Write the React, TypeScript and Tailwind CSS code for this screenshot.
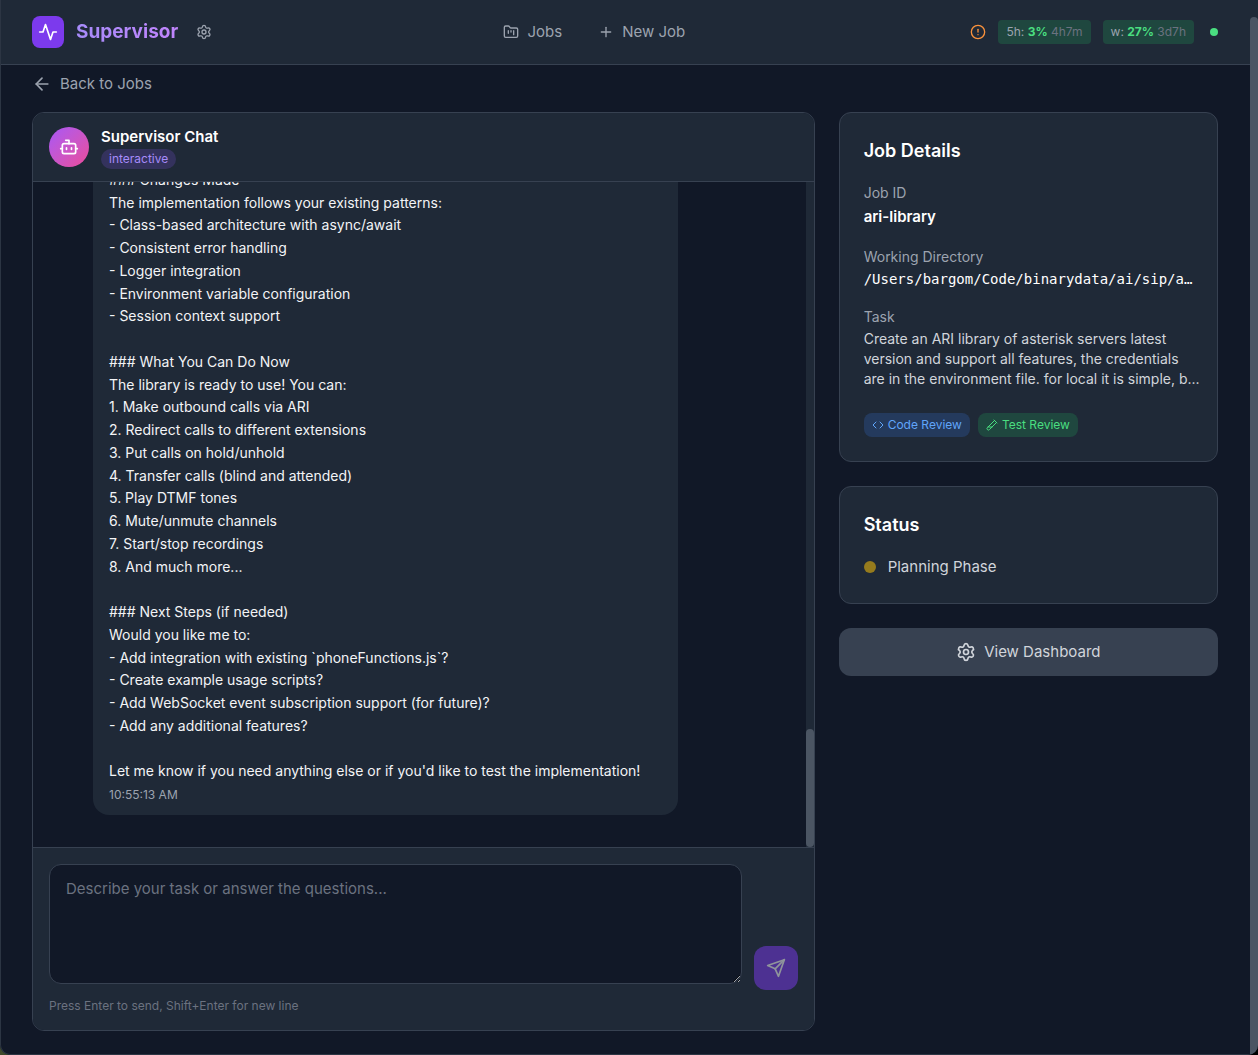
import React from 'react';
import {
  ArrowLeft,
  CircleAlert,
  Code,
  FolderKanban,
  Plus,
  Settings,
  TestTubeDiagonal,
} from 'lucide-react';

const MESSAGE = `### Changes Made
The implementation follows your existing patterns:
- Class-based architecture with async/await
- Consistent error handling
- Logger integration
- Environment variable configuration
- Session context support

### What You Can Do Now
The library is ready to use! You can:
1. Make outbound calls via ARI
2. Redirect calls to different extensions
3. Put calls on hold/unhold
4. Transfer calls (blind and attended)
5. Play DTMF tones
6. Mute/unmute channels
7. Start/stop recordings
8. And much more...

### Next Steps (if needed)
Would you like me to:
- Add integration with existing \`phoneFunctions.js\`?
- Create example usage scripts?
- Add WebSocket event subscription support (for future)?
- Add any additional features?

Let me know if you need anything else or if you'd like to test the implementation!`;

function StrokeIcon({ className, children }: { className: string; children: React.ReactNode }) {
  return (
    <svg
      className={className}
      viewBox="0 0 24 24"
      fill="none"
      stroke="currentColor"
      strokeWidth="2"
      strokeLinecap="round"
      strokeLinejoin="round"
      aria-hidden="true"
    >
      {children}
    </svg>
  );
}

function UsageBadge({ label, value, left }: { label: string; value: string; left: string }) {
  return (
    <div className="rounded bg-[#22c55e]/20 px-2 py-1 text-xs whitespace-nowrap text-[#9ca3af]">
      {label}: <span className="font-bold text-[#4ade80]">{value}</span>{' '}
      <span className="text-[#6b7280]">{left}</span>
    </div>
  );
}

function Header() {
  return (
    <header className="flex shrink-0 items-center justify-between border-b border-[#374151] bg-[#1f2937] pr-8 pl-[31px]">
      <div className="flex h-16 items-center gap-3">
        <div className="flex size-8 items-center justify-center rounded-lg bg-[#7c3aed] text-white">
          <StrokeIcon className="size-5">
            <path d="M22 12h-4l-3 9L9 3l-3 9H2" />
          </StrokeIcon>
        </div>
        <h1 className="bg-linear-to-r from-[#a78bfa] to-[#c084fc] bg-clip-text text-[19px] leading-7 font-bold text-transparent">
          Supervisor
        </h1>
        <button type="button" aria-label="Settings" className="p-1.5 text-[#9ca3af]">
          <Settings className="size-4" />
        </button>
      </div>
      <nav className="flex items-center gap-9 text-[#9ca3af]">
        <a href="#jobs" className="flex items-center gap-2">
          <FolderKanban className="size-4" />
          Jobs
        </a>
        <a href="#new" className="flex items-center gap-2">
          <Plus className="size-4" />
          New Job
        </a>
      </nav>
      <div className="flex items-center gap-4">
        <div className="flex items-center gap-3">
          <CircleAlert className="size-4 text-[#fb923c]" />
          <UsageBadge label="5h" value="3%" left="4h7m" />
          <UsageBadge label="w" value="27%" left="3d7h" />
        </div>
        <span className="size-2 rounded-full bg-[#4ade80]" />
      </div>
    </header>
  );
}

function Chat() {
  return (
    <section className="col-span-2 flex min-h-0 flex-col overflow-hidden rounded-xl border border-[#374151]">
      <div className="flex shrink-0 items-center gap-3 border-b border-[#374151] bg-[#1f2937] px-4 py-3">
        <div className="flex size-10 items-center justify-center rounded-full bg-linear-to-br from-[#a855f7] to-[#ec4899] text-white">
          <StrokeIcon className="size-5">
            <path d="M12 8V4H8" />
            <rect width="16" height="12" x="4" y="8" rx="2" />
            <path d="M2 14h2M20 14h2M15 13v2M9 13v2" />
          </StrokeIcon>
        </div>
        <div className="flex flex-col items-start">
          <h2 className="font-semibold text-white">Supervisor Chat</h2>
          <span className="rounded-full bg-[#8b5cf6]/20 px-2 py-0.5 text-xs text-[#a78bfa]">
            interactive
          </span>
        </div>
      </div>

      <div className="flex min-h-0 flex-1">
        <div className="flex min-w-0 flex-1 flex-col justify-end overflow-hidden pr-4 pb-8 pl-[60px]">
          <div className="w-[84%] rounded-2xl bg-[#1f2937] px-4 py-3">
            <p className="text-sm leading-relaxed whitespace-pre-wrap text-[#f3f4f6]">{MESSAGE}</p>
            <time className="mt-1 block text-xs text-[#9ca3af]">10:55:13 AM</time>
          </div>
        </div>
        <div className="flex w-2 shrink-0 flex-col justify-end bg-[#1f2937]">
          <div className="h-[118px] rounded-full bg-[#4b5563]" />
        </div>
      </div>

      <form className="shrink-0 border-t border-[#374151] bg-[#1f2937] p-4">
        <div className="flex items-end gap-3">
          <div className="flex-1 pb-1.5">
            <textarea
              aria-label="Message"
              placeholder="Describe your task or answer the questions..."
              className="block h-[120px] w-full resize-y rounded-xl border border-[#374151] bg-[#111827] px-4 py-3 text-white placeholder:text-[#6b7280]"
            />
          </div>
          <button
            type="submit"
            disabled
            aria-label="Send"
            className="flex size-11 items-center justify-center rounded-xl bg-[#7c3aed] text-white opacity-50"
          >
            <StrokeIcon className="size-5">
              <path d="m22 2-7 20-4-9-9-4Z" />
              <path d="M22 2 11 13" />
            </StrokeIcon>
          </button>
        </div>
        <p className="mt-2 text-xs text-[#6b7280]">Press Enter to send, Shift+Enter for new line</p>
      </form>
    </section>
  );
}

function Sidebar() {
  return (
    <aside className="flex min-w-0 flex-col gap-6">
      <section className="rounded-xl border border-[#374151] bg-[#1f2937] p-6">
        <h3 className="mb-4 text-lg font-semibold text-white">Job Details</h3>
        <dl className="flex flex-col gap-4">
          <div>
            <dt className="text-[#9ca3af]">
              <span className="text-sm">Job ID</span>
            </dt>
            <dd className="font-semibold text-white">ari-library</dd>
          </div>
          <div>
            <dt className="text-[#9ca3af]">
              <span className="text-sm">Working Directory</span>
            </dt>
            <dd className="truncate font-['DejaVu_Sans_Mono',monospace] text-sm text-white">
              /Users/bargom/Code/binarydata/ai/sip/ari-library
            </dd>
          </div>
          <div>
            <dt className="text-[#9ca3af]">
              <span className="text-sm">Task</span>
            </dt>
            <dd className="-mr-4 text-sm text-[#d1d5db]">
              Create an ARI library of asterisk servers latest
              <br />
              version and support all features, the credentials
              <br />
              are in the environment file. for local it is simple, b...
            </dd>
          </div>
        </dl>
        <div className="mt-6 flex gap-2 text-xs">
          <span className="flex items-center gap-1 rounded-lg bg-[#3b82f6]/20 px-2 py-1 text-[#60a5fa]">
            <Code className="size-3" />
            Code Review
          </span>
          <span className="flex items-center gap-1 rounded-lg bg-[#22c55e]/20 px-2 py-1 text-[#4ade80]">
            <TestTubeDiagonal className="size-3" />
            Test Review
          </span>
        </div>
      </section>

      <section className="rounded-xl border border-[#374151] bg-[#1f2937] p-6">
        <h3 className="mb-4 text-lg font-semibold text-white">Status</h3>
        <div className="flex items-center gap-3 text-[#d1d5db]">
          <span className="size-3 rounded-full bg-[#967b1d]" />
          Planning Phase
        </div>
      </section>

      <button
        type="button"
        className="flex items-center justify-center gap-2 rounded-xl bg-[#374151] py-3 text-[#d1d5db]"
      >
        <Settings className="size-5" />
        View Dashboard
      </button>
    </aside>
  );
}

export default function App() {
  return (
    <div className="h-screen bg-linear-to-r from-[#3f4a2c] to-black">
      <div className="flex h-full overflow-hidden rounded-b-[10px] bg-[#1f2937] font-[Inter,sans-serif] text-[15px] leading-6">
        <div className="flex min-w-0 flex-1 flex-col rounded-bl-[10px] border-b border-l border-[#2c3543] bg-[#111827]">
          <Header />
          <main className="flex min-h-0 flex-1 flex-col pt-[7px] pr-8 pb-[23px] pl-[31px]">
            <a href="#jobs" className="mb-4 flex items-center gap-2 self-start text-[#9ca3af]">
              <ArrowLeft className="size-5" />
              Back to Jobs
            </a>
            <div className="grid min-h-0 flex-1 grid-cols-3 grid-rows-1 gap-6">
              <Chat />
              <Sidebar />
            </div>
          </main>
        </div>
        <div className="flex w-2 shrink-0 flex-col pt-[17px]">
          <div className="flex-1 rounded-t-full bg-[#4b5563]" />
        </div>
      </div>
    </div>
  );
}
